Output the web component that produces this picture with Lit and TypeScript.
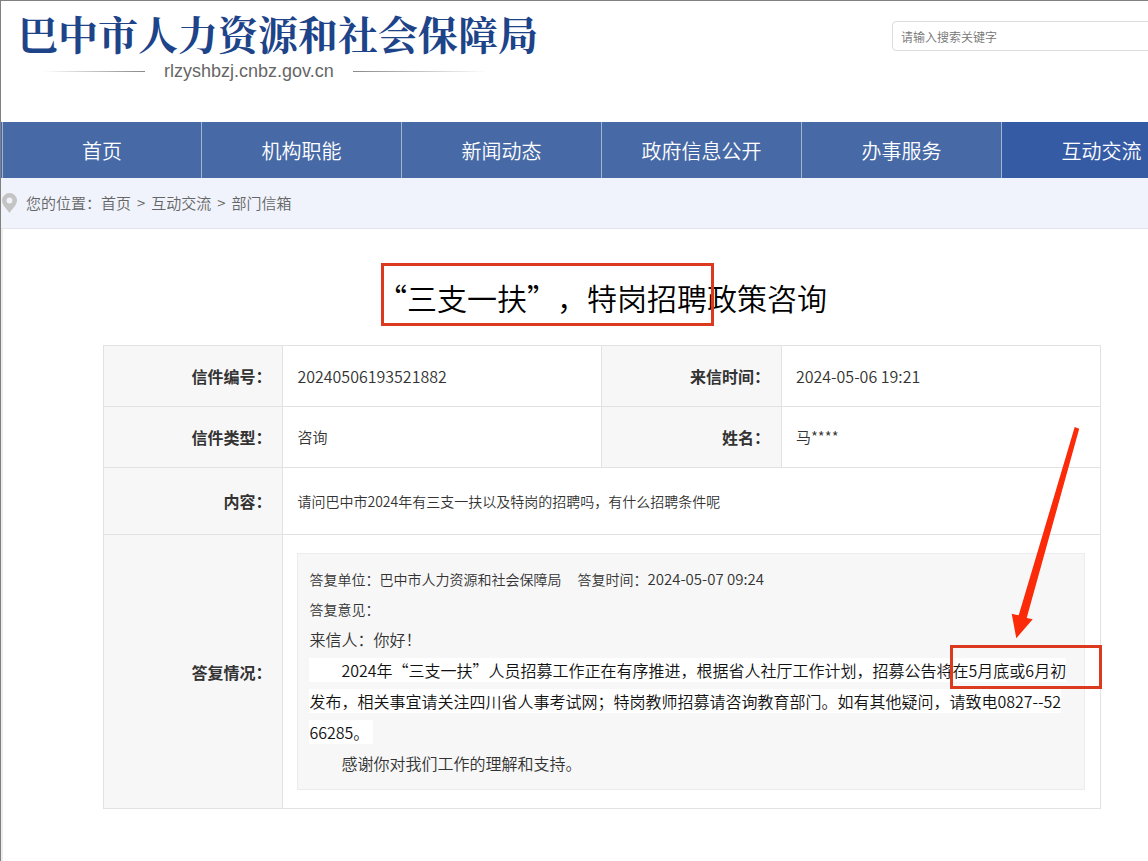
import { LitElement, html, css } from "lit";
import { customElement } from "lit/decorators.js";
import { classMap } from "lit/directives/class-map.js";

const NAV = ["首页", "机构职能", "新闻动态", "政府信息公开", "办事服务", "互动交流"];
const ACTIVE = "互动交流";

@customElement("site-header")
class SiteHeader extends LitElement {
  static styles = css`
    :host { display: block; }
    .header { display: flex; justify-content: space-between; align-items: flex-start; height: 121px; }
    .brand { padding: 2px 0 0 17px; }
    .name {
      margin: 0; font: 700 40px/60px "Noto Serif CJK SC", "Noto Sans CJK SC", serif;
      color: #1d4389; white-space: nowrap;
    }
    .domain { display: flex; align-items: center; gap: 19px; margin: -2px 0 0 25px;
      font: 18px/20px "Liberation Sans", sans-serif; color: #666; }
    .rule { height: 1px; width: 102px; background: linear-gradient(to right, transparent, #888); }
    .rule.end { width: 135px; background: linear-gradient(to left, transparent, #888); }
    .search { margin-top: 20px; }
    .field {
      box-sizing: border-box; width: 310px; height: 30px; padding: 0 8px;
      border: 1px solid #ddd; border-radius: 4px; background: #fff;
      font: 350 12px/28px "Noto Sans CJK SC", sans-serif;
    }
    .field::placeholder { color: #757575; opacity: 1; }
    .nav { display: grid; grid-template-columns: repeat(6, 1fr); background: #476aa6; padding-left: 1px; }
    .item {
      border-right: 1px solid #a3b5d3;
      color: #fff; text-decoration: none; text-align: center; padding-top: 1px;
      font: 350 20px/55px "Noto Sans CJK SC", sans-serif;
    }
    .item:first-child { border-left: 1px solid #a3b5d3; }
    .item.active { background: #355ba5; }
  `;
  render() {
    return html`
      <header class="header">
        <div class="brand">
          <h1 class="name">巴中市人力资源和社会保障局</h1>
          <div class="domain"><span class="rule"></span>rlzyshbzj.cnbz.gov.cn<span class="rule end"></span></div>
        </div>
        <form class="search" role="search">
          <input class="field" type="text" aria-label="请输入搜索关键字" placeholder="请输入搜索关键字" />
        </form>
      </header>
      <nav class="nav">
        ${NAV.map((n) => html`<a href="#" class=${classMap({ item: true, active: n === ACTIVE })}>${n}</a>`)}
      </nav>
    `;
  }
}

@customElement("bread-crumb")
class BreadCrumb extends LitElement {
  static styles = css`
    :host { display: block; background: #f0f3fb; border-bottom: 1px solid #e3e4ea; }
    .crumbs { display: flex; align-items: center; padding-left: 1px; color: #666; font: 350 15px/50px "Noto Sans CJK SC", sans-serif; }
    .pin { display: block; margin-right: 9px; }
    .sep { padding: 0 6px; }
    a { color: inherit; text-decoration: none; }
  `;
  render() {
    return html`
      <nav class="crumbs" aria-label="您的位置">
        <svg class="pin" width="15" height="20" viewBox="0 0 15 20">
          <path fill="#c4c4c4" fill-rule="evenodd"
            d="M7.5 0A7.5 7.5 0 0 0 0 7.5C0 12 5 16 7.5 20C10 16 15 12 15 7.5A7.5 7.5 0 0 0 7.5 0ZM7.5 4.6A2.9 2.9 0 1 1 7.5 10.4A2.9 2.9 0 1 1 7.5 4.6Z" />
        </svg>
        <span>您的位置：</span>
        <a href="#">首页</a><span class="sep">&gt;</span>
        <a href="#">互动交流</a><span class="sep">&gt;</span>
        <a href="#">部门信箱</a>
      </nav>
    `;
  }
}

@customElement("letter-detail")
class LetterDetail extends LitElement {
  static styles = css`
    :host { display: block; padding: 48px 101px 52px 100px; border-left: 2px solid #ededed;
      font-family: "Noto Sans CJK SC", sans-serif; font-weight: 350; color: #333; text-spacing-trim: space-all; }
    .title { margin: 0 0 28px; text-align: center; color: #000; font-size: 30px; line-height: 40px; font-weight: 350; }
    .text { position: relative; display: inline-block; white-space: nowrap; }
    .mark { position: absolute; box-sizing: border-box; border: 3px solid #dc3a1e; pointer-events: none; }
    .text .mark { left: 4px; top: -14px; width: 333px; height: 63px; }
    .letter { width: 100%; border-collapse: collapse; table-layout: fixed; }
    .letter th, .letter td { border: 1px solid #e2e2e2; padding: 0 15px 0 14px; }
    .letter th { background: #f7f7f7; text-align: right; font-weight: 700; font-size: 16px; line-height: 60px; padding: 0 11px; }
    .letter td { text-align: left; font-size: 15px; line-height: 60px; }
    .letter .number { font-size: 16px; }
    .label { width: 18%; }
    .value { width: 32%; }
    .letter td.question { font-size: 14px; line-height: 66px; }
    .letter td.answer { padding: 18px 15px 18px 14px; }
    .reply { position: relative; background: #f7f7f7; border: 1px solid #ececec; padding: 10px 15px 10px 11px; font-size: 14px; line-height: 30px; }
    .reply p { margin: 0; }
    .meta { display: flex; }
    .unit { margin-right: 16px; }
    .time { font-size: 15px; }
    .body { font-size: 16px; line-height: 31px; word-break: break-all; }
    .hl { background: #fff; color: #111; }
    .indent { text-indent: 32px; }
    .reply .mark { right: -18px; top: 91px; width: 152px; height: 44px; }
    .arrow { position: absolute; right: 4px; top: -129px; pointer-events: none; }
  `;
  render() {
    return html`
      <h2 class="title"><span class="text">“三支一扶”，特岗招聘政策咨询<span class="mark"></span></span></h2>
      <table class="letter">
        <colgroup><col class="label" /><col class="value" /><col class="label" /><col class="value" /></colgroup>
        <tbody>
          <tr>
            <th scope="row">信件编号：</th><td class="number">20240506193521882</td>
            <th scope="row">来信时间：</th><td class="number">2024-05-06 19:21</td>
          </tr>
          <tr>
            <th scope="row">信件类型：</th><td>咨询</td>
            <th scope="row">姓名：</th><td>马****</td>
          </tr>
          <tr>
            <th scope="row">内容：</th>
            <td class="question" colspan="3">请问巴中市2024年有三支一扶以及特岗的招聘吗，有什么招聘条件呢</td>
          </tr>
          <tr>
            <th scope="row">答复情况：</th>
            <td class="answer" colspan="3">
              <div class="reply">
                <p class="meta"><span class="unit">答复单位：巴中市人力资源和社会保障局</span><span>答复时间：</span><span class="time">2024-05-07 09:24</span></p>
                <p>答复意见：</p>
                <div class="body">
                  <p>来信人：你好！</p>
                  <p><span class="hl">　　2024年“三支一扶”人员招募工作正在有序推进，根据省人社厅工作计划，招募公告将在5月底或6月初发布，相关事宜请关注四川省人事考试网；特岗教师招募请咨询教育部门。如有其他疑问，请致电0827--5266285。&nbsp;</span></p>
                  <p class="indent">感谢你对我们工作的理解和支持。</p>
                </div>
                <span class="mark"></span>
                <svg class="arrow" width="70" height="215" viewBox="1010 425 70 215">
                  <path fill="#fb2a08" d="M1074.7 427L1079.2 428.8L1026.7 618L1032.7 619.3L1016.3 638.3L1011.7 613.7L1018.7 615.3Z" />
                </svg>
              </div>
            </td>
          </tr>
        </tbody>
      </table>
    `;
  }
}

@customElement("app-root")
class AppRoot extends LitElement {
  static styles = css`
    :host { display: block; overflow: hidden; min-height: 100vh; box-sizing: border-box;
      border-top: 1px solid #808080; border-left: 1px solid #808080; background: #fff; }
    .page { min-width: 1201px; }
  `;
  render() {
    return html`
      <div class="page">
        <site-header></site-header>
        <bread-crumb></bread-crumb>
        <main><letter-detail></letter-detail></main>
      </div>
    `;
  }
}
